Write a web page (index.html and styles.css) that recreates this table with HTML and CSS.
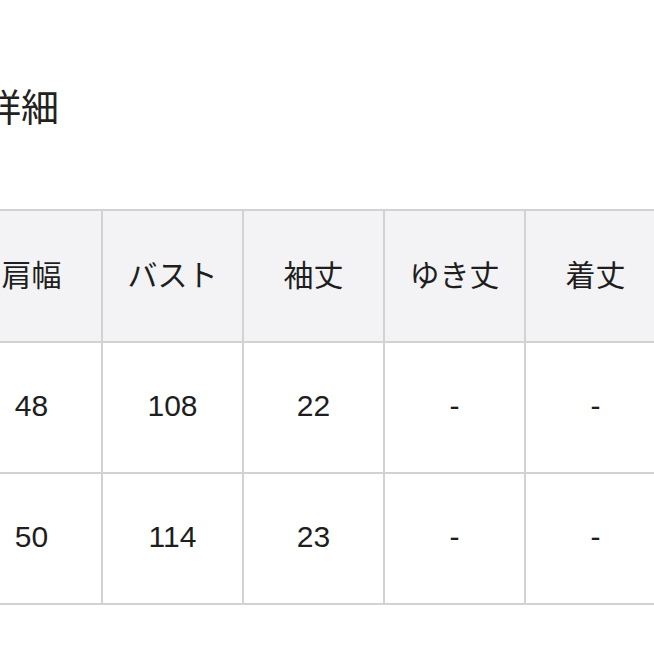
FILE: index.html
```html
<!DOCTYPE html>
<html lang="ja">
<head>
<meta charset="utf-8">
<title>詳細</title>
<link rel="stylesheet" href="styles.css">
</head>
<body>
<main class="page">
  <h2 class="title">詳細</h2>
  <div class="size-table">
    <div class="cell head">肩幅</div>
    <div class="cell head">バスト</div>
    <div class="cell head">袖丈</div>
    <div class="cell head">ゆき丈</div>
    <div class="cell head">着丈</div>
    <div class="cell num">48</div>
    <div class="cell num">108</div>
    <div class="cell num">22</div>
    <div class="cell num">-</div>
    <div class="cell num">-</div>
    <div class="cell num">50</div>
    <div class="cell num">114</div>
    <div class="cell num">23</div>
    <div class="cell num">-</div>
    <div class="cell num">-</div>
  </div>
</main>
</body>
</html>
```

FILE: styles.css
```css
html, body {
  margin: 0;
  padding: 0;
  background: #ffffff;
  overflow: hidden;
}

.page {
  width: 654px;
  height: 654px;
  overflow: hidden;
  display: flex;
  flex-direction: column;
}

.title {
  margin: 86px 0 0 -17px;
  font-family: "Noto Sans CJK JP", "Noto Sans", sans-serif;
  font-size: 38px;
  font-weight: 400;
  line-height: 38px;
  height: 38px;
  color: #222222;
  white-space: nowrap;
}

.size-table {
  margin: 85px 0 0 -40px;
  display: grid;
  grid-template-columns: repeat(5, 139px);
  grid-template-rows: 130px 129px 129px;
  gap: 2px;
  border: 2px solid #d2d2d2;
  background: #d2d2d2;
  width: max-content;
}

.cell {
  display: flex;
  align-items: center;
  justify-content: center;
  background: #ffffff;
  color: #1e1e1e;
  font-size: 30px;
}

.head {
  background: #f3f3f5;
  font-family: "Noto Sans CJK JP", "Noto Sans", sans-serif;
  padding-bottom: 6px;
  box-sizing: border-box;
}

.num {
  font-family: "Liberation Sans", Arial, sans-serif;
  padding-bottom: 3px;
  box-sizing: border-box;
}
```
